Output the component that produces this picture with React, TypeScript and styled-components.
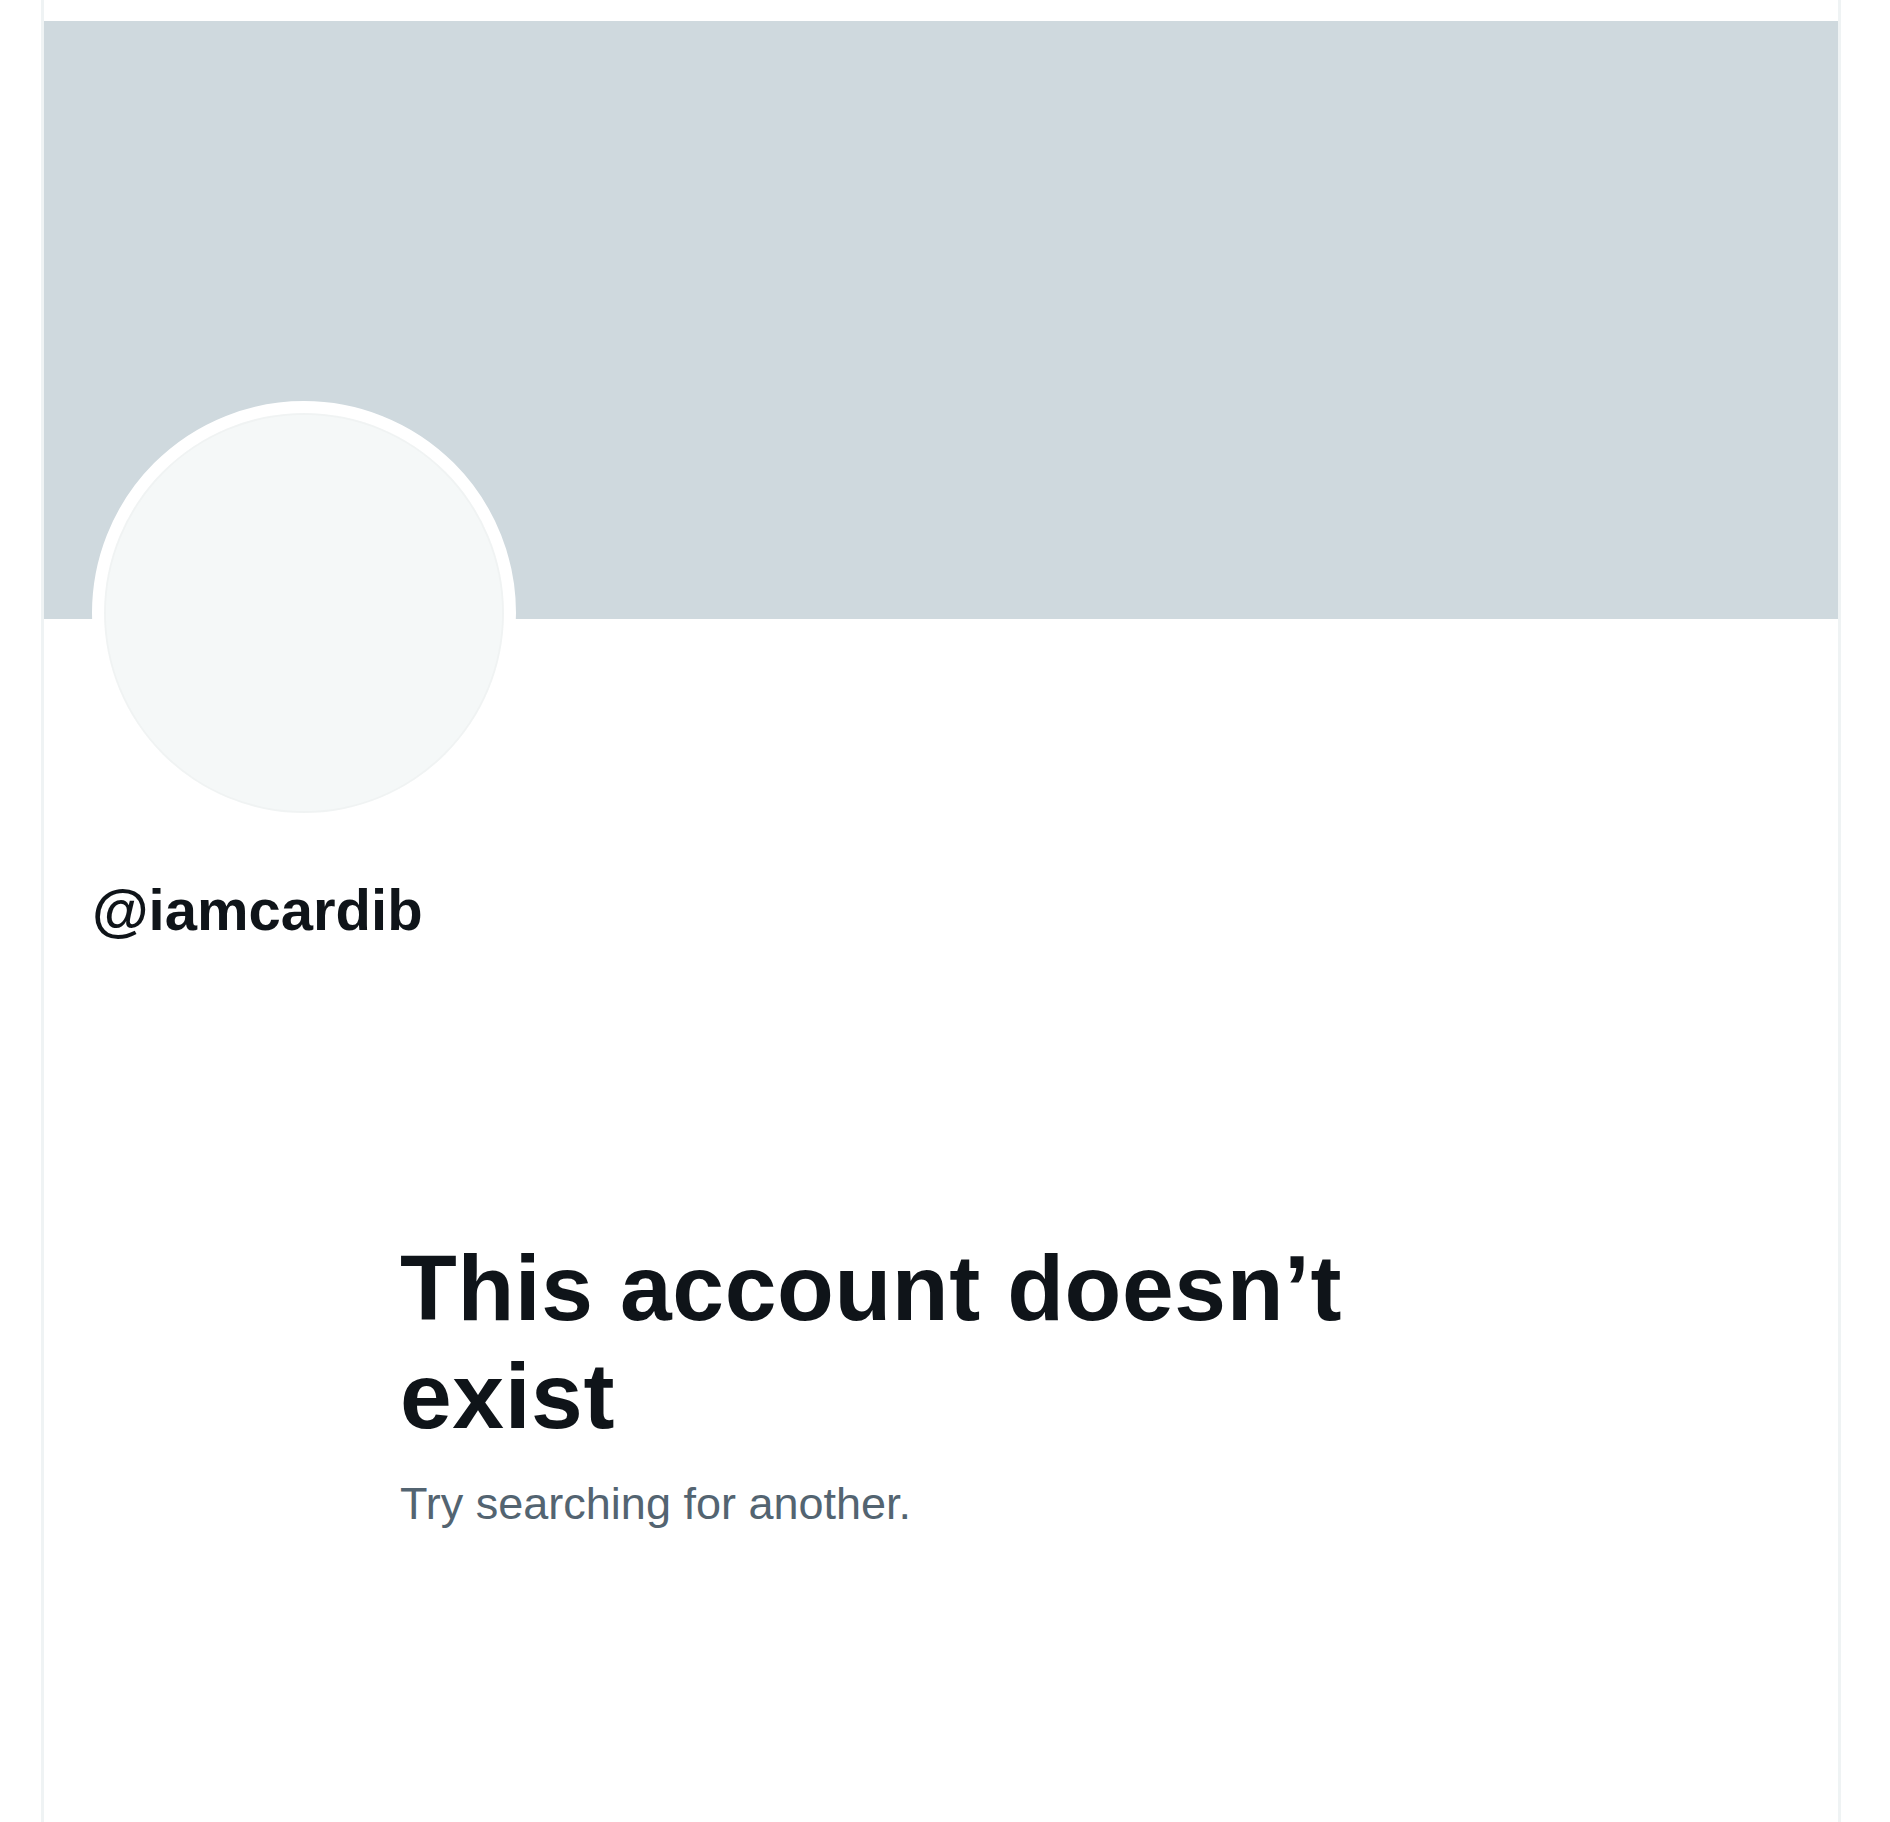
import React from "react";
import styled, { createGlobalStyle } from "styled-components";

const GlobalStyle = createGlobalStyle`
  html, body {
    margin: 0;
    padding: 0;
    background: #ffffff;
  }
  body {
    font-family: "Liberation Sans", Arial, sans-serif;
    color: #0f1419;
  }
  * { box-sizing: border-box; }
`;

const Column = styled.main`
  margin-left: 41px;
  width: 1800px;
  min-height: 1822px;
  padding-top: 21px;
  border-left: 3px solid #eff3f4;
  border-right: 3px solid #eff3f4;
  display: flex;
  flex-direction: column;
`;

const Banner = styled.div`
  width: 100%;
  height: 598px;
  background: #cfd9de;
`;

const ProfileHeader = styled.section`
  display: flex;
  flex-direction: column;
  align-items: flex-start;
  padding: 0 48px;
`;

const Avatar = styled.div`
  width: 424px;
  height: 424px;
  margin-top: -218px;
  border-radius: 50%;
  border: 12px solid #ffffff;
  background: #ffffff;
  display: flex;
`;

const AvatarFill = styled.div`
  flex: 1;
  border-radius: 50%;
  background: #f5f8f8;
  box-shadow: inset 0 0 0 2px rgba(0, 0, 0, 0.02);
`;

const Handle = styled.h2`
  margin: 49px 0 0 0;
  font-size: 58px;
  line-height: 72px;
  font-weight: 700;
  color: #0f1419;
`;

const EmptyState = styled.section`
  width: 1082px;
  margin: 288px auto 0;
  display: flex;
  flex-direction: column;
  gap: 24px;
`;

const Heading = styled.h1`
  margin: 0;
  font-size: 93px;
  line-height: 108px;
  font-weight: 700;
  letter-spacing: 0.6px;
  color: #0f1419;
`;

const Subtitle = styled.p`
  margin: 0;
  font-size: 45px;
  line-height: 60px;
  font-weight: 400;
  color: #536471;
`;

export default function App() {
  return (
    <>
      <GlobalStyle />
      <Column>
        <Banner />
        <ProfileHeader>
          <Avatar>
            <AvatarFill />
          </Avatar>
          <Handle>@iamcardib</Handle>
        </ProfileHeader>
        <EmptyState>
          <Heading>This account doesn’t exist</Heading>
          <Subtitle>Try searching for another.</Subtitle>
        </EmptyState>
      </Column>
    </>
  );
}
